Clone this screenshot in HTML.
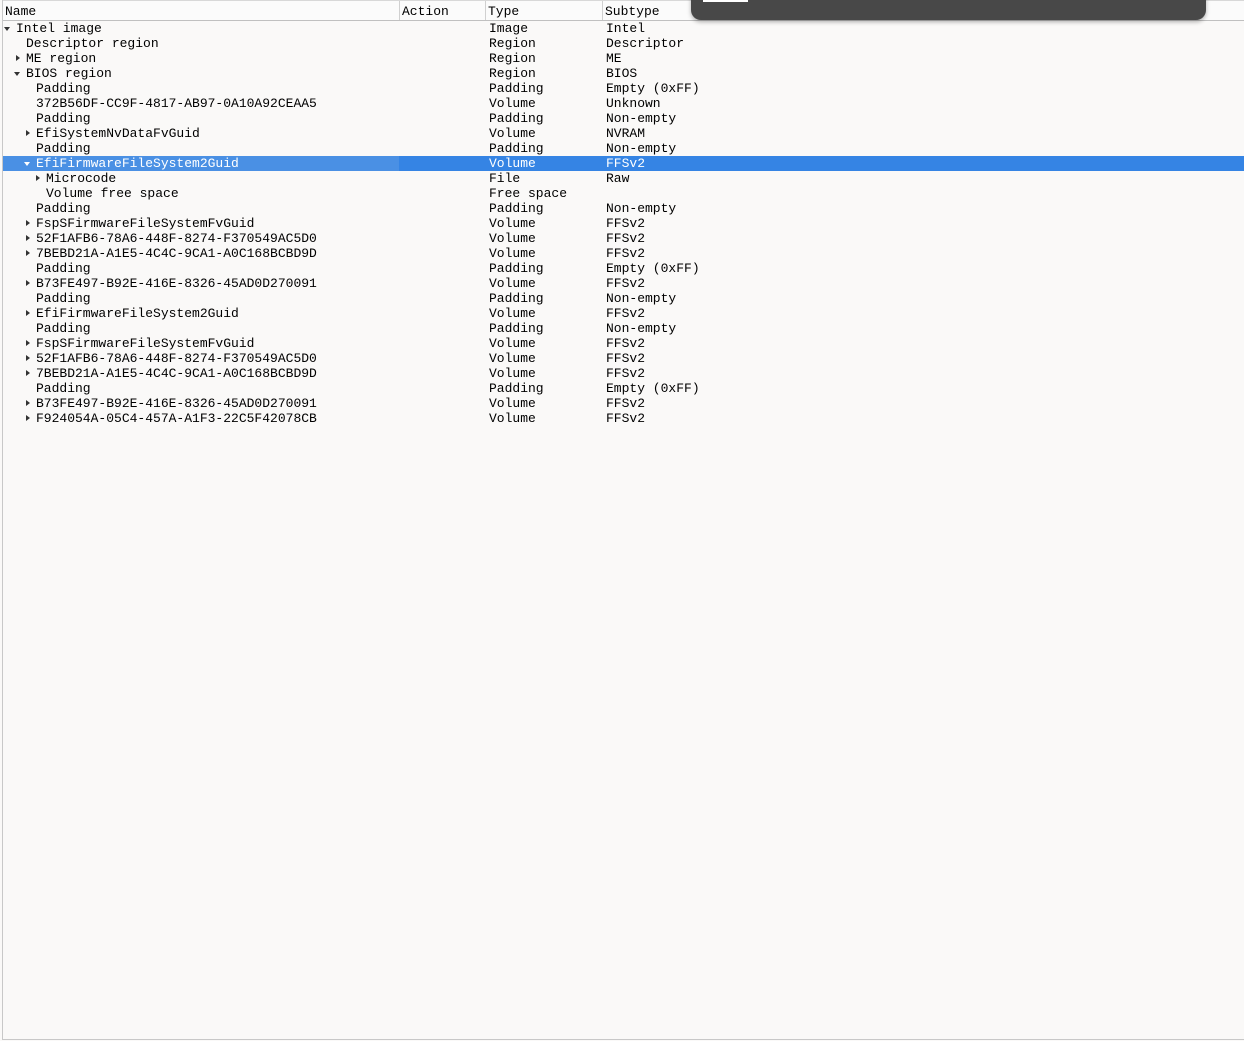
<!DOCTYPE html><html><head><style>
body{margin:0;width:1244px;height:1041px;background:#faf9f8;font:13px "Liberation Mono",monospace;color:#000;position:relative;overflow:hidden}
.frame{position:absolute;left:2px;top:0;width:1242px;height:1040px;border-left:1px solid #c8c8c8;border-bottom:1px solid #c8c8c8;box-sizing:border-box}
.hdr{position:absolute;left:3px;top:0;width:1241px;height:21px;border-bottom:1px solid #c0c0c0;border-top:1px solid #d8d8d8;box-sizing:border-box;background:#fbfbfb}
.hc{position:absolute;top:0;height:19px;line-height:21px;border-right:1px solid #d0d0d0;padding-left:2px;box-sizing:border-box}
.r{position:absolute;left:3px;width:1241px;height:15px;line-height:15px;white-space:pre}
.r span{position:absolute;top:0}
.sel{background:#3584e4;color:#fff}
.sel .nm{background:#4a90e4}
.r .a{width:0;height:0}
.r .ar{border-top:3.5px solid transparent;border-bottom:3.5px solid transparent;border-left:4px solid #333;top:4px}
.r .ad{border-left:3.5px solid transparent;border-right:3.5px solid transparent;border-top:4px solid #333;top:6px}
.sel .ad{border-top-color:#fff}
.ov{position:absolute;left:691px;top:-12px;width:515px;height:32px;background:#484848;border-radius:10px;box-shadow:0 2px 4px rgba(0,0,0,.3)}
.ov i{position:absolute;left:12px;top:12px;width:45px;height:2px;background:#fff}
</style></head><body>
<div class="frame"></div>
<div class="hdr">
<div class="hc" style="left:0;width:397px">Name</div>
<div class="hc" style="left:397px;width:86px">Action</div>
<div class="hc" style="left:483px;width:117px">Type</div>
<div class="hc" style="left:600px;width:641px;border-right:0">Subtype</div>
</div>
<div id="rows"></div>
<div class="ov"><i></i></div>
<script>
var d=[[0,'d','Intel image','Image','Intel'],[1,'','Descriptor region','Region','Descriptor'],[1,'r','ME region','Region','ME'],[1,'d','BIOS region','Region','BIOS'],[2,'','Padding','Padding','Empty (0xFF)'],[2,'','372B56DF-CC9F-4817-AB97-0A10A92CEAA5','Volume','Unknown'],[2,'','Padding','Padding','Non-empty'],[2,'r','EfiSystemNvDataFvGuid','Volume','NVRAM'],[2,'','Padding','Padding','Non-empty'],[2,'d','EfiFirmwareFileSystem2Guid','Volume','FFSv2',1],[3,'r','Microcode','File','Raw'],[3,'','Volume free space','Free space',''],[2,'','Padding','Padding','Non-empty'],[2,'r','FspSFirmwareFileSystemFvGuid','Volume','FFSv2'],[2,'r','52F1AFB6-78A6-448F-8274-F370549AC5D0','Volume','FFSv2'],[2,'r','7BEBD21A-A1E5-4C4C-9CA1-A0C168BCBD9D','Volume','FFSv2'],[2,'','Padding','Padding','Empty (0xFF)'],[2,'r','B73FE497-B92E-416E-8326-45AD0D270091','Volume','FFSv2'],[2,'','Padding','Padding','Non-empty'],[2,'r','EfiFirmwareFileSystem2Guid','Volume','FFSv2'],[2,'','Padding','Padding','Non-empty'],[2,'r','FspSFirmwareFileSystemFvGuid','Volume','FFSv2'],[2,'r','52F1AFB6-78A6-448F-8274-F370549AC5D0','Volume','FFSv2'],[2,'r','7BEBD21A-A1E5-4C4C-9CA1-A0C168BCBD9D','Volume','FFSv2'],[2,'','Padding','Padding','Empty (0xFF)'],[2,'r','B73FE497-B92E-416E-8326-45AD0D270091','Volume','FFSv2'],[2,'r','F924054A-05C4-457A-A1F3-22C5F42078CB','Volume','FFSv2']];
var h='';d.forEach(function(x,i){var t=20+15*i,l=x[0]*10;
h+='<div class="r'+(x[5]?' sel':'')+'" style="top:'+(t+0.5)+'px">'+(x[5]?'<span class="nm" style="left:0;width:396px;height:15px"></span>':'')+
(x[1]?'<span class="a a'+x[1]+'" style="left:'+(l+(x[1]=='r'?3:1))+'px"></span>':'')+
'<span style="left:'+(l+13)+'px">'+x[2]+'</span><span style="left:486px">'+x[3]+'</span><span style="left:603px">'+x[4]+'</span></div>';});
document.getElementById('rows').innerHTML=h;
</script>
</body></html>
